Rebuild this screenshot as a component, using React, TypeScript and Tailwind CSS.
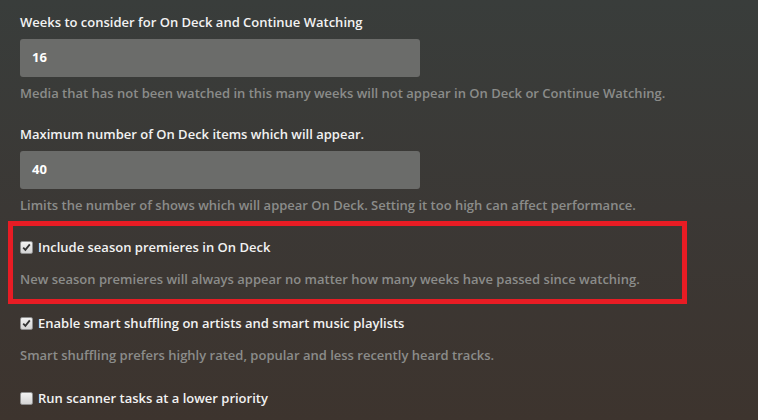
const Check = ({ checked }: { checked: boolean }) => (
  <span className="inline-flex w-[13px] h-[13px] shrink-0 items-center justify-center rounded-[2px] border border-[#8e8e8e] bg-gradient-to-b from-[#f2f2f2] to-[#d4d4d4]">
    {checked && (
      <svg width="9" height="9" viewBox="0 0 9 9">
        <path d="M1.2 4.6 L3.4 6.9 L7.8 1.4" fill="none" stroke="#333" strokeWidth="1.8" />
      </svg>
    )}
  </span>
);

const Field = ({ label, value, help }: { label: string; value: string; help: string }) => (
  <div>
    <div className="text-[13px] leading-[18px] font-semibold text-[#f2f2f2]">{label}</div>
    <div className="mt-2 w-[400px] h-[38px] rounded-[3px] bg-[#6b6c6a] px-3 flex items-center text-[13px] font-bold text-white">
      {value}
    </div>
    <div className="mt-[7px] text-[13px] leading-[18px] font-semibold text-[#8b8c8a]">{help}</div>
  </div>
);

const Toggle = ({ label, help, checked }: { label: string; help?: string; checked: boolean }) => (
  <div>
    <label className="flex items-center gap-[5px] text-[13px] leading-[18px] font-semibold text-[#f2f2f2]">
      <Check checked={checked} />
      {label}
    </label>
    {help && <div className="mt-[14px] text-[13px] leading-[18px] font-semibold text-[#8b8c8a]">{help}</div>}
  </div>
);

export default function App() {
  return (
    <div
      className="w-[758px] h-[420px] overflow-hidden bg-gradient-to-b from-[#393d3b] via-[#3b3835] to-[#3d342e] px-5 pt-[13px]"
      style={{ fontFamily: '"Open Sans", "Liberation Sans", sans-serif' }}
    >
      <Field
        label="Weeks to consider for On Deck and Continue Watching"
        value="16"
        help="Media that has not been watched in this many weeks will not appear in On Deck or Continue Watching."
      />
      <div className="mt-[23px]">
        <Field
          label="Maximum number of On Deck items which will appear."
          value="40"
          help="Limits the number of shows which will appear On Deck. Setting it too high can affect performance."
        />
      </div>
      <div className="mt-[7px] -ml-3 w-[679px] border-[5px] border-[#e81c24] pl-[7px] pt-3 pb-[11px]">
        <Toggle
          checked
          label="Include season premieres in On Deck"
          help="New season premieres will always appear no matter how many weeks have passed since watching."
        />
      </div>
      <div className="mt-[10px]">
        <Toggle
          checked
          label="Enable smart shuffling on artists and smart music playlists"
          help="Smart shuffling prefers highly rated, popular and less recently heard tracks."
        />
      </div>
      <div className="mt-[25px]">
        <Toggle checked={false} label="Run scanner tasks at a lower priority" />
      </div>
    </div>
  );
}
